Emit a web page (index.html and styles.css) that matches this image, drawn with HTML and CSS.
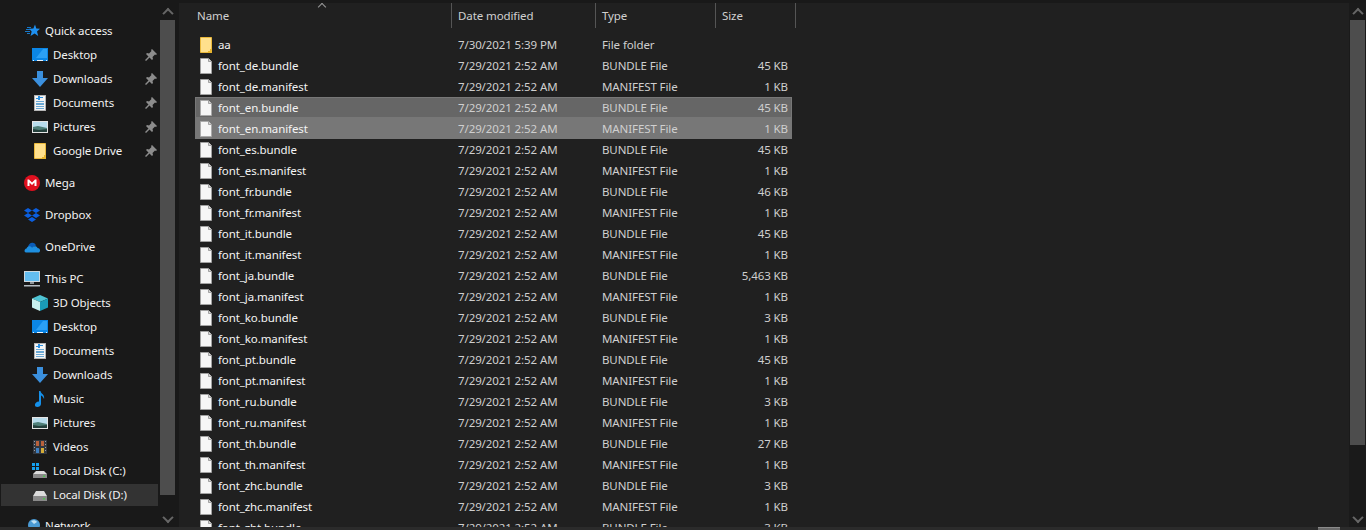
FILE: index.html
```html
<!DOCTYPE html>
<html lang="en">
<head>
    <meta charset="UTF-8">
    <meta name="viewport" content="width=device-width, initial-scale=1.0">
    <title>File Explorer</title>
    <link rel="stylesheet" href="styles.css">
</head>
<body>
    <!-- icon sprites -->
    <svg class="sprites" width="0" height="0">
        <symbol id="i-star" viewBox="0 0 16 16">
            <path d="M11 1.500l1.300 4 3.700.3-3 2.700 1.200 4.500-3.600-2.400L6.500 13l1.200-4.500-2.700-2.700 4.400-.3z" fill="#1e90f0"/>
            <path d="M3 4h4v1H3zM2 6h4v1H2zM1 8h5v1H1zM3 10h3v1H3z" fill="#1878c8"/>
        </symbol>
        <symbol id="i-desktop" viewBox="0 0 16 16">
            <rect x="0" y="1" width="16" height="13" fill="#0b86e6"/>
            <path d="M11 2h4v9H4z" fill="#2ba0f5"/>
            <path d="M1 13h1v1H1zM5 13h6v1H5zM14 13h1v1h-1z" fill="#e8f4ff"/>
        </symbol>
        <symbol id="i-down" viewBox="0 0 16 16">
            <path d="M5 0h6v7h5l-8 9-8-9h5z" fill="#3b90de"/>
        </symbol>
        <symbol id="i-docs" viewBox="0 0 16 16">
            <rect x="2.300" y=".3" width="11.400" height="15.400" fill="#f4f4f4" stroke="#b8b8b8" stroke-width=".6"/>
            <path d="M6 1h2v4H6zM8 2h3v1H8zM4 3h2v1H4z" fill="#2a8fe0"/>
            <path d="M4 6h8v1H4zM4 8h8v2H4zM4 11h8v1H4zM4 13h8v1H4z" fill="#6aa8d4"/>
        </symbol>
        <symbol id="i-pics" viewBox="0 0 16 16">
            <rect x="0" y="2" width="16" height="12" fill="#e4e4e4"/>
            <rect x="1" y="3" width="14" height="10" fill="#b8dcec"/>
            <path d="M1 8l5-1 9 2v4H1z" fill="#4f7f78"/>
            <path d="M1 10l6 1 8-1v3H1z" fill="#24403c"/>
        </symbol>
        <symbol id="i-folder" viewBox="0 0 16 16">
            <path d="M2.500 0.500h11v15h-11z" fill="#ffe08c" stroke="#eab93c"/>
            <path d="M12 12h2v4h-4v-2h2z" fill="#e8b52e"/>
        </symbol>
        <symbol id="i-pin" viewBox="0 0 12 12">
            <path d="M7 0l5 5-1 1-1-.5L7.500 8l.5 2-1 1-2.500-2.500L1 12l-1-1 3.500-3.500L1 5l1-1 2 .5L6.500 2 6 1z" fill="#8c8c8c"/>
        </symbol>
        <symbol id="i-mega" viewBox="0 0 16 16">
            <circle cx="8" cy="8" r="8" fill="#e0101f"/>
            <path d="M3.500 11V4.500h1.500L8 7.500l3-3h1.500V11h-2V7.500L8 10 5.500 7.500V11z" fill="#fff"/>
        </symbol>
        <symbol id="i-dropbox" viewBox="0 0 16 16">
            <path d="M4 1l4 2.500L4 6 0 3.500zM12 1l4 2.500L12 6 8 3.500zM4 6l4 2.500L4 11 0 8.500zM12 6l4 2.500L12 11 8 8.500zM8 10l4 2.500L8 15l-4-2.500z" fill="#0b5fe0"/>
        </symbol>
        <symbol id="i-onedrive" viewBox="0 0 16 16">
            <path d="M4 8c.5-3 3-5 5.500-4 1 .3 2 1.200 2.500 2.500L5 10z" fill="#0a5cb8"/>
            <path d="M2 13.500C0 13.500 0 10 2.500 9.500 3 7.500 5.500 6 8 8.500c2-2 5-1.500 5.500 .5 2.500 0 3.500 3 1.500 4.500z" fill="#1e8fe0"/>
        </symbol>
        <symbol id="i-pc" viewBox="0 0 16 16">
            <rect x="0" y="0" width="16" height="11" fill="#cfd8de"/>
            <rect x="1" y="1" width="14" height="9" fill="#63bdf0"/>
            <path d="M6 11h4v2H6z" fill="#8a9298"/>
            <path d="M0 14h16v1.500H0z" fill="#b4bcc2"/>
        </symbol>
        <symbol id="i-cube" viewBox="0 0 16 16">
            <path d="M8 0l8 3.500L8 7 0 3.500z" fill="#4fc4d4"/>
            <path d="M0 3.500L8 7v9L0 12.500z" fill="#c8f0ee"/>
            <path d="M16 3.500L8 7v9l8-3.500z" fill="#1a9cb8"/>
        </symbol>
        <symbol id="i-music" viewBox="0 0 16 16">
            <path d="M7 0h1.500c.5 3 4.500 3.500 3.500 8-.5-1.500-1.500-3-3-3.500v8.500C9 15.500 5.500 16.500 3.500 15.500 2 14 3.500 10.500 7 10.500z" fill="#1590ea"/>
        </symbol>
        <symbol id="i-video" viewBox="0 0 16 16">
            <rect x="1" y="1" width="14" height="14" fill="#333840"/>
            <path d="M4 2h3v5H4zM9 2h3v5H9z" fill="#b8613c"/>
            <path d="M4 9h3v5H4z" fill="#3f7fc0"/>
            <path d="M9 9h3v5H9z" fill="#d4ac38"/>
            <path d="M2 2h1v1H2zM2 5h1v1H2zM2 8h1v1H2zM2 11h1v1H2zM13 2h1v1h-1zM13 5h1v1h-1zM13 8h1v1h-1zM13 11h1v1h-1z" fill="#9aa0a8"/>
        </symbol>
        <symbol id="i-disk" viewBox="0 0 16 16">
            <path d="M4 4h8l3 5H1z" fill="#dcdcdc"/>
            <path d="M1 9h14v5H1z" fill="#8a8a8a"/>
            <path d="M11 11h2v1.500h-2z" fill="#4fc04f"/>
        </symbol>
        <symbol id="i-win" viewBox="0 0 16 16">
            <path d="M0 0h3v3H0zM4 0h3v3H4zM0 4h3v3H0zM4 4h3v3H4z" fill="#14a0f0"/>
            <path d="M4 8h8l3 3H1z" fill="#dcdcdc"/>
            <path d="M1 11h14v4H1z" fill="#8a8a8a"/>
            <path d="M11 12.500h2V14h-2z" fill="#4fc04f"/>
        </symbol>
        <symbol id="i-net" viewBox="0 0 16 16">
            <circle cx="10" cy="7" r="6" fill="#4a9ad4"/>
            <path d="M7 3c2-1.500 5-1 6 1l-3 2z" fill="#bfe0f4"/>
            <path d="M0 12h16v3H0z" fill="#3f8ccc"/>
        </symbol>
        <symbol id="i-file" viewBox="0 0 16 16">
            <path d="M2.500 .5h8l3 3v12h-11z" fill="#f6f6f6" stroke="#a8a8a8" stroke-width=".8"/>
            <path d="M10.500 .5v3h3" fill="#d8d8d8" stroke="#909090" stroke-width=".8"/>
        </symbol>
    </svg>

    <div class="window">
        <aside class="nav-pane">
            <nav class="nav-tree">
                <div class="nav-group">
                    <div class="nav-item"><svg class="icon"><use href="#i-star"/></svg><span>Quick access</span></div>
                    <div class="nav-item sub"><svg class="icon"><use href="#i-desktop"/></svg><span>Desktop</span><svg class="pin"><use href="#i-pin"/></svg></div>
                    <div class="nav-item sub"><svg class="icon"><use href="#i-down"/></svg><span>Downloads</span><svg class="pin"><use href="#i-pin"/></svg></div>
                    <div class="nav-item sub"><svg class="icon"><use href="#i-docs"/></svg><span>Documents</span><svg class="pin"><use href="#i-pin"/></svg></div>
                    <div class="nav-item sub"><svg class="icon"><use href="#i-pics"/></svg><span>Pictures</span><svg class="pin"><use href="#i-pin"/></svg></div>
                    <div class="nav-item sub"><svg class="icon"><use href="#i-folder"/></svg><span>Google Drive</span><svg class="pin"><use href="#i-pin"/></svg></div>
                </div>
                <div class="nav-group">
                    <div class="nav-item"><svg class="icon"><use href="#i-mega"/></svg><span>Mega</span></div>
                </div>
                <div class="nav-group">
                    <div class="nav-item"><svg class="icon"><use href="#i-dropbox"/></svg><span>Dropbox</span></div>
                </div>
                <div class="nav-group">
                    <div class="nav-item"><svg class="icon"><use href="#i-onedrive"/></svg><span>OneDrive</span></div>
                </div>
                <div class="nav-group">
                    <div class="nav-item"><svg class="icon"><use href="#i-pc"/></svg><span>This PC</span></div>
                    <div class="nav-item sub"><svg class="icon"><use href="#i-cube"/></svg><span>3D Objects</span></div>
                    <div class="nav-item sub"><svg class="icon"><use href="#i-desktop"/></svg><span>Desktop</span></div>
                    <div class="nav-item sub"><svg class="icon"><use href="#i-docs"/></svg><span>Documents</span></div>
                    <div class="nav-item sub"><svg class="icon"><use href="#i-down"/></svg><span>Downloads</span></div>
                    <div class="nav-item sub"><svg class="icon"><use href="#i-music"/></svg><span>Music</span></div>
                    <div class="nav-item sub"><svg class="icon"><use href="#i-pics"/></svg><span>Pictures</span></div>
                    <div class="nav-item sub"><svg class="icon"><use href="#i-video"/></svg><span>Videos</span></div>
                    <div class="nav-item sub"><svg class="icon"><use href="#i-win"/></svg><span>Local Disk (C:)</span></div>
                    <div class="nav-item sub active"><svg class="icon"><use href="#i-disk"/></svg><span>Local Disk (D:)</span></div>
                </div>
                <div class="nav-group">
                    <div class="nav-item"><svg class="icon"><use href="#i-net"/></svg><span>Network</span></div>
                </div>
            </nav>
            <div class="scrollbar nav-scroll">
                <div class="arrow up"></div>
                <div class="thumb"></div>
                <div class="arrow down"></div>
            </div>
        </aside>

        <main class="content">
            <div class="list">
                <div class="col-head">
                    <div class="caret"></div>
                    <div class="head-cell head-name">Name</div>
                    <div class="head-cell">Date modified</div>
                    <div class="head-cell">Type</div>
                    <div class="head-cell">Size</div>
                </div>
                <div class="rows">
                    <div class="row"><div class="name"><svg class="icon"><use href="#i-folder"/></svg>aa</div><div>7/30/2021 5:39 PM</div><div>File folder</div><div class="size"></div></div>
                    <div class="row"><div class="name"><svg class="icon"><use href="#i-file"/></svg>font_de.bundle</div><div>7/29/2021 2:52 AM</div><div>BUNDLE File</div><div class="size">45 KB</div></div>
                    <div class="row"><div class="name"><svg class="icon"><use href="#i-file"/></svg>font_de.manifest</div><div>7/29/2021 2:52 AM</div><div>MANIFEST File</div><div class="size">1 KB</div></div>
                    <div class="row selected"><div class="name"><svg class="icon"><use href="#i-file"/></svg>font_en.bundle</div><div>7/29/2021 2:52 AM</div><div>BUNDLE File</div><div class="size">45 KB</div></div>
                    <div class="row selected hover"><div class="name"><svg class="icon"><use href="#i-file"/></svg>font_en.manifest</div><div>7/29/2021 2:52 AM</div><div>MANIFEST File</div><div class="size">1 KB</div></div>
                    <div class="row"><div class="name"><svg class="icon"><use href="#i-file"/></svg>font_es.bundle</div><div>7/29/2021 2:52 AM</div><div>BUNDLE File</div><div class="size">45 KB</div></div>
                    <div class="row"><div class="name"><svg class="icon"><use href="#i-file"/></svg>font_es.manifest</div><div>7/29/2021 2:52 AM</div><div>MANIFEST File</div><div class="size">1 KB</div></div>
                    <div class="row"><div class="name"><svg class="icon"><use href="#i-file"/></svg>font_fr.bundle</div><div>7/29/2021 2:52 AM</div><div>BUNDLE File</div><div class="size">46 KB</div></div>
                    <div class="row"><div class="name"><svg class="icon"><use href="#i-file"/></svg>font_fr.manifest</div><div>7/29/2021 2:52 AM</div><div>MANIFEST File</div><div class="size">1 KB</div></div>
                    <div class="row"><div class="name"><svg class="icon"><use href="#i-file"/></svg>font_it.bundle</div><div>7/29/2021 2:52 AM</div><div>BUNDLE File</div><div class="size">45 KB</div></div>
                    <div class="row"><div class="name"><svg class="icon"><use href="#i-file"/></svg>font_it.manifest</div><div>7/29/2021 2:52 AM</div><div>MANIFEST File</div><div class="size">1 KB</div></div>
                    <div class="row"><div class="name"><svg class="icon"><use href="#i-file"/></svg>font_ja.bundle</div><div>7/29/2021 2:52 AM</div><div>BUNDLE File</div><div class="size">5,463 KB</div></div>
                    <div class="row"><div class="name"><svg class="icon"><use href="#i-file"/></svg>font_ja.manifest</div><div>7/29/2021 2:52 AM</div><div>MANIFEST File</div><div class="size">1 KB</div></div>
                    <div class="row"><div class="name"><svg class="icon"><use href="#i-file"/></svg>font_ko.bundle</div><div>7/29/2021 2:52 AM</div><div>BUNDLE File</div><div class="size">3 KB</div></div>
                    <div class="row"><div class="name"><svg class="icon"><use href="#i-file"/></svg>font_ko.manifest</div><div>7/29/2021 2:52 AM</div><div>MANIFEST File</div><div class="size">1 KB</div></div>
                    <div class="row"><div class="name"><svg class="icon"><use href="#i-file"/></svg>font_pt.bundle</div><div>7/29/2021 2:52 AM</div><div>BUNDLE File</div><div class="size">45 KB</div></div>
                    <div class="row"><div class="name"><svg class="icon"><use href="#i-file"/></svg>font_pt.manifest</div><div>7/29/2021 2:52 AM</div><div>MANIFEST File</div><div class="size">1 KB</div></div>
                    <div class="row"><div class="name"><svg class="icon"><use href="#i-file"/></svg>font_ru.bundle</div><div>7/29/2021 2:52 AM</div><div>BUNDLE File</div><div class="size">3 KB</div></div>
                    <div class="row"><div class="name"><svg class="icon"><use href="#i-file"/></svg>font_ru.manifest</div><div>7/29/2021 2:52 AM</div><div>MANIFEST File</div><div class="size">1 KB</div></div>
                    <div class="row"><div class="name"><svg class="icon"><use href="#i-file"/></svg>font_th.bundle</div><div>7/29/2021 2:52 AM</div><div>BUNDLE File</div><div class="size">27 KB</div></div>
                    <div class="row"><div class="name"><svg class="icon"><use href="#i-file"/></svg>font_th.manifest</div><div>7/29/2021 2:52 AM</div><div>MANIFEST File</div><div class="size">1 KB</div></div>
                    <div class="row"><div class="name"><svg class="icon"><use href="#i-file"/></svg>font_zhc.bundle</div><div>7/29/2021 2:52 AM</div><div>BUNDLE File</div><div class="size">3 KB</div></div>
                    <div class="row"><div class="name"><svg class="icon"><use href="#i-file"/></svg>font_zhc.manifest</div><div>7/29/2021 2:52 AM</div><div>MANIFEST File</div><div class="size">1 KB</div></div>
                    <div class="row"><div class="name"><svg class="icon"><use href="#i-file"/></svg>font_zht.bundle</div><div>7/29/2021 2:52 AM</div><div>BUNDLE File</div><div class="size">3 KB</div></div>
                </div>
            </div>
            <div class="scrollbar main-scroll">
                <div class="arrow up"></div>
                <div class="thumb"></div>
                <div class="arrow down"></div>
            </div>
        </main>
    </div>

    <div class="hscroll"><div class="hthumb"></div></div>
</body>
</html>
```

FILE: styles.css
```css
html, body { margin: 0; padding: 0; height: 100%; overflow: hidden; }
body { display: flex; flex-direction: column; background: #191919; color: #fff; font-family: "Noto Sans", sans-serif; font-size: 11.5px; letter-spacing: -0.1px; }
.sprites { position: absolute; }

.window { flex: 1; min-height: 0; display: flex; padding-top: 3px; }

/* left tree */
.nav-pane { width: 176px; display: flex; flex-shrink: 0; margin-top: -3px; }
.nav-tree { width: 160px; padding-top: 19px; overflow: hidden; }
.nav-group { margin-bottom: 8px; }
.nav-item { height: 24px; display: flex; align-items: center; padding-left: 24px; width: 158px; box-sizing: border-box; color: #f2f2f2; white-space: nowrap; }
.nav-item span { padding-bottom: 1px; }
.nav-item .icon { margin-right: 5px; }
.nav-item.sub { padding-left: 32px; }
.nav-item.active { background: #333; margin-left: 1px; width: 157px; padding-left: 31px; height: 22px; margin-top: 1px; margin-bottom: 1px; }
.icon { width: 16px; height: 16px; flex-shrink: 0; }
.pin { width: 12px; height: 12px; margin-left: auto; margin-right: 1px; }

/* scrollbars */
.scrollbar { display: flex; flex-direction: column; align-items: center; flex-shrink: 0; }
.nav-scroll { width: 15px; margin-left: 0; padding-top: 3px; }
.main-scroll { width: 17px; background: #1a1a1a; }
.arrow { height: 17px; width: 15px; flex-shrink: 0; display: flex; align-items: center; justify-content: center; }
.arrow::before { content: ""; width: 6px; height: 6px; border-left: 2px solid #666; border-top: 2px solid #666; }
.arrow.up::before { transform: rotate(45deg) translate(1px, 1px); }
.arrow.down::before { transform: rotate(225deg) translate(1px, 1px); }
.thumb { background: #4d4d4d; width: 15px; flex-shrink: 0; }
.nav-scroll .thumb { height: 475px; }
.nav-scroll .arrow.down { margin-top: auto; }
.main-scroll .thumb { height: 425px; }
.main-scroll .arrow.down { margin-top: auto; }

/* file list */
.content { flex: 1; display: flex; min-width: 0; margin-left: 3px; background: #202020; }
.list { flex: 1; padding-left: 16px; overflow: hidden; position: relative; }
.col-head { display: grid; grid-template-columns: 257px 144px 120px 80px; height: 25px; margin-bottom: 6px; position: relative; }
.head-cell { border-right: 1px solid #555; padding-left: 6px; line-height: 25px; color: #d0d0d0; }
.head-cell.head-name { padding-left: 2px; }
.caret { position: absolute; left: 124px; top: 1px; width: 5px; height: 5px; border-left: 1px solid #999; border-top: 1px solid #999; transform: rotate(45deg); }
.row { display: grid; grid-template-columns: 257px 144px 120px 76px; height: 21px; width: 597px; align-items: center; box-sizing: border-box; color: #cfcfcf; white-space: nowrap; }
.row > div { padding-left: 6px; }
.row .name { display: flex; align-items: center; padding-left: 3px; color: #f4f4f4; }
.row .name .icon { margin-right: 4px; }
.row .size { padding: 0 4px 0 0; text-align: right; }
.row.selected { background: #666; outline: 1px solid #777; outline-offset: -1px; }
.row.selected.hover { background: #777; }

/* bottom strip */
.hscroll { height: 3px; flex-shrink: 0; background: #2b2b2b; display: flex; justify-content: flex-end; padding-right: 26px; }
.hthumb { width: 22px; background: #6a6a6a; border-top: 1px solid #8a8a8a; box-sizing: border-box; }
```
